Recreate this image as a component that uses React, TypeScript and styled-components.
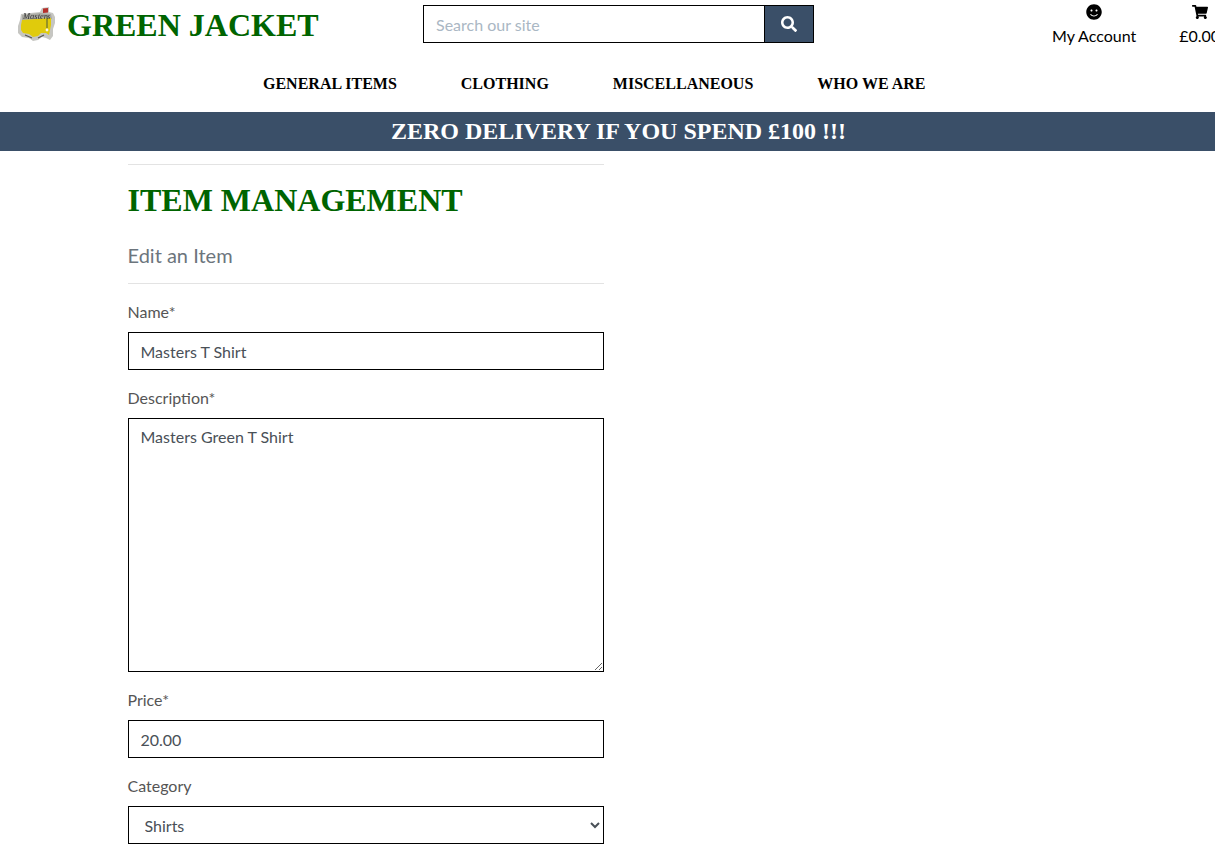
import * as React from 'react';
import styled, { createGlobalStyle } from 'styled-components';
import { FaSearch, FaSmile, FaShoppingCart } from 'react-icons/fa';

const Global = createGlobalStyle`
  html, body {
    margin: 0;
    padding: 0;
    height: 862px;
    overflow: hidden;
    background: #fff;
  }
  body {
    font-family: Lato, "Liberation Sans", sans-serif;
    font-size: 16px;
    line-height: 1.5;
    color: #555;
  }
  * { box-sizing: border-box; }
`;

const TopRow = styled.div`
  display: flex;
  align-items: flex-start;
  height: 62px;
  width: 1240px;
`;

const Brand = styled.a`
  display: flex;
  align-items: center;
  width: 423px;
  height: 50px;
  padding-left: 18px;
  gap: 11px;
`;

const BrandName = styled.span`
  font-family: "Liberation Serif", serif;
  font-weight: 700;
  font-size: 32px;
  line-height: 1.2;
  color: #006400;
`;

const SearchForm = styled.form`
  display: flex;
  width: 391px;
  height: 38px;
  margin-top: 5px;
`;

const SearchInput = styled.input`
  flex: 1;
  min-width: 0;
  height: 38px;
  border: 1px solid #000;
  padding: 6px 12px;
  font: 16px/1.5 Lato, sans-serif;
  color: #495057;
  outline: none;
  &::placeholder {
    color: #aab7c4;
    opacity: 1;
  }
`;

const SearchButton = styled.button`
  width: 50px;
  height: 38px;
  margin-left: -1px;
  border: 1px solid #000;
  background: #3a4f68;
  color: #fff;
  font-size: 16px;
  display: flex;
  align-items: center;
  justify-content: center;
  padding: 0;
`;

const Shortcuts = styled.ul`
  list-style: none;
  display: flex;
  margin: 0;
  padding: 0 0 0 238px;
  gap: 43px;
`;

const Shortcut = styled.li`
  display: flex;
  flex-direction: column;
  align-items: center;
  color: #000;
  padding-top: 4px;
  line-height: 24px;
  svg {
    display: block;
    height: 16px;
    width: auto;
    margin-bottom: 4px;
  }
`;

const Nav = styled.nav`
  display: flex;
  height: 50px;
  padding-left: 231px;
  align-items: center;
`;

const NavLink = styled.a`
  padding: 0 32px;
  font-family: "Liberation Serif", serif;
  font-weight: 700;
  font-size: 16px;
  line-height: 24px;
  color: #000;
  white-space: nowrap;
  position: relative;
  top: -3px;
`;

const Banner = styled.div`
  height: 39px;
  background: #3a4f68;
  color: #fff;
  font-family: "Liberation Serif", serif;
  font-weight: 700;
  font-size: 24px;
  line-height: 39px;
  text-align: center;
  padding-left: 22px;
`;

const Main = styled.main`
  width: 476px;
  margin-left: 127.5px;
  padding-top: 13px;
`;

const Rule = styled.hr`
  margin: 0;
  border: 0;
  border-top: 1px solid #e3e3e3;
`;

const Title = styled.h2`
  margin: 16px 0 0;
  font-family: "Liberation Serif", serif;
  font-weight: 700;
  font-size: 32px;
  line-height: 38px;
  color: #006400;
`;

const SubTitle = styled.h5`
  margin: 24px 0 16px;
  font-weight: 400;
  font-size: 20px;
  line-height: 24px;
  color: #6c757d;
`;

const Field = styled.div`
  margin-bottom: 16px;
`;

const Label = styled.label`
  display: block;
  margin-bottom: 8px;
  line-height: 24px;
  color: #555;
`;

const control = `
  display: block;
  width: 100%;
  border: 1px solid #000;
  border-radius: 0;
  background: #fff;
  font: 16px/1.5 Lato, sans-serif;
  color: #495057;
  padding: 6px 12px;
  outline: none;
`;

const Input = styled.input`
  ${control}
  height: 38px;
`;

const TextArea = styled.textarea`
  ${control}
  height: 254px;
  resize: vertical;
`;

const Select = styled.select`
  ${control}
  height: 38px;
`;

const Form = styled.form`
  margin-top: 16px;
`;

const BadgeWrap = styled.svg`
  display: block;
  flex: none;
  margin-bottom: 2px;
  filter: blur(0.35px);
`;

// hand drawn Masters badge: yellow map of the US with a flag on top
const BadgeLogo = () => (
  <BadgeWrap width="38" height="34" viewBox="0 0 38 34" aria-hidden="true">
    <path
      d="M3 7 L22 5 L24 1 L31 0 L31 5 L35 6 L37 10 L37 16 L35 22 L35 29 L32 33 L28 31 L24 30 L20 33 L15 34 L11 31 L4 30 L0 26 L0 19 L2 13 Z"
      fill="#c6c6c2"
    />
    <path d="M4 8 L22 6 L33 7 L34 12 L4 13 Z" fill="#a9a9a2" />
    <path
      d="M4 13 L33 11 L33 18 L32 23 L31 28 L28 26 L23 26 L20 29 L15 30 L11 27 L5 26 L3 23 L3 18 Z"
      fill="#e0cb0c"
    />
    <path d="M7 28 L14 31 M20 31 L26 28" stroke="#55554f" strokeWidth="1.2" />
    <path d="M29 9 L29 21" stroke="#4d5a3a" strokeWidth="1" />
    <circle cx="29" cy="23" r="1.4" fill="#f4f4ee" />
    <path d="M25 1.5 L30 1 L30 5.5 L25 6 Z" fill="#b5302c" />
    <text x="5" y="12" fontFamily="Liberation Serif, serif" fontStyle="italic" fontSize="8.5" fill="#333">
      Masters
    </text>
  </BadgeWrap>
);

export default function App() {
  return (
    <>
      <Global />
      <TopRow>
        <Brand>
          <BadgeLogo />
          <BrandName>GREEN JACKET</BrandName>
        </Brand>
        <SearchForm>
          <SearchInput placeholder="Search our site" />
          <SearchButton type="button">
            <FaSearch />
          </SearchButton>
        </SearchForm>
        <Shortcuts>
          <Shortcut>
            <FaSmile />
            My Account
          </Shortcut>
          <Shortcut>
            <FaShoppingCart />
            £0.00
          </Shortcut>
        </Shortcuts>
      </TopRow>
      <Nav>
        <NavLink>GENERAL ITEMS</NavLink>
        <NavLink>CLOTHING</NavLink>
        <NavLink>MISCELLANEOUS</NavLink>
        <NavLink>WHO WE ARE</NavLink>
      </Nav>
      <Banner>ZERO DELIVERY IF YOU SPEND £100 !!!</Banner>
      <Main>
        <Rule />
        <Title>ITEM MANAGEMENT</Title>
        <SubTitle>Edit an Item</SubTitle>
        <Rule />
        <Form>
          <Field>
            <Label>Name*</Label>
            <Input defaultValue="Masters T Shirt" />
          </Field>
          <Field>
            <Label>Description*</Label>
            <TextArea defaultValue="Masters Green T Shirt" />
          </Field>
          <Field>
            <Label>Price*</Label>
            <Input defaultValue="20.00" />
          </Field>
          <Field>
            <Label>Category</Label>
            <Select defaultValue="Shirts">
              <option>Shirts</option>
              <option>Hats</option>
            </Select>
          </Field>
        </Form>
      </Main>
    </>
  );
}
